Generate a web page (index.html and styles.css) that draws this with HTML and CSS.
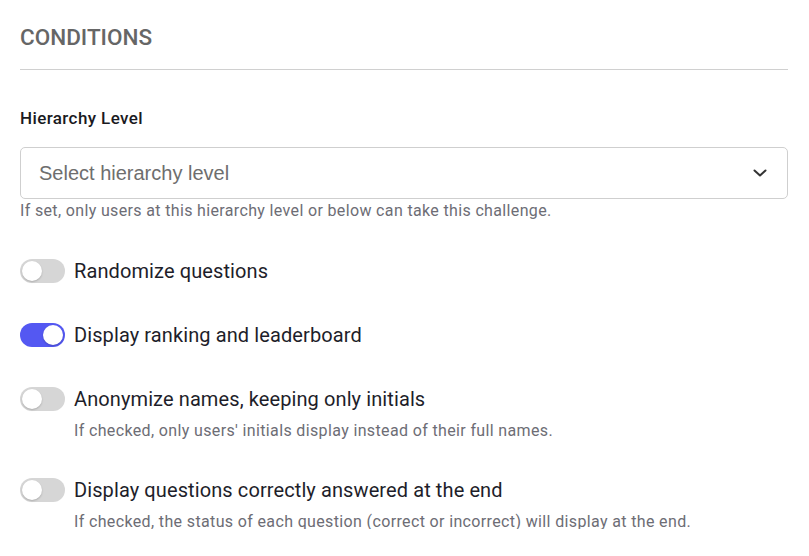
FILE: index.html
```html
<!DOCTYPE html>
<html>
<head>
<meta charset="utf-8">
<link rel="stylesheet" href="styles.css">
</head>
<body>
<div class="panel">
  <h2 class="title">CONDITIONS</h2>
  <div class="field">
    <label class="field-label">Hierarchy Level</label>
    <div class="select">
      <span class="placeholder">Select hierarchy level</span>
      <svg class="chevron" width="14" height="8" viewBox="0 0 14 8"><path d="M1.5 1.5 L7 6.5 L12.5 1.5" fill="none" stroke="#333" stroke-width="2" stroke-linecap="round" stroke-linejoin="round"/></svg>
    </div>
    <p class="hint">If set, only users at this hierarchy level or below can take this challenge.</p>
  </div>
  <div class="toggles">
    <div class="toggle-row">
      <span class="switch"><span class="knob"></span></span>
      <div class="toggle-text"><div class="toggle-label">Randomize questions</div></div>
    </div>
    <div class="toggle-row">
      <span class="switch on"><span class="knob"></span></span>
      <div class="toggle-text"><div class="toggle-label">Display ranking and leaderboard</div></div>
    </div>
    <div class="toggle-row">
      <span class="switch"><span class="knob"></span></span>
      <div class="toggle-text">
        <div class="toggle-label">Anonymize names, keeping only initials</div>
        <div class="toggle-hint">If checked, only users' initials display instead of their full names.</div>
      </div>
    </div>
    <div class="toggle-row">
      <span class="switch"><span class="knob"></span></span>
      <div class="toggle-text">
        <div class="toggle-label">Display questions correctly answered at the end</div>
        <div class="toggle-hint">If checked, the status of each question (correct or incorrect) will display at the end.</div>
      </div>
    </div>
  </div>
</div>
</body>
</html>
```
FILE: styles.css
```css
* { box-sizing: border-box; }
html, body { margin: 0; padding: 0; background: #fff; }
body { font-family: Roboto, "Noto Sans", sans-serif; color: #1e1e2a; }
.panel { padding: 22px 21px 0 20px; }
.title {
  margin: 0;
  font-size: 22.5px;
  font-weight: 500;
  color: #666666;
  line-height: 30px;
  padding-bottom: 17px;
  border-bottom: 1px solid #d0d0d0;
}
.field { margin-top: 37px; }
.field-label {
  display: block;
  font-size: 17px;
  letter-spacing: 0.4px;
  font-weight: 500;
  line-height: 22px;
  color: #1a1a22;
  margin-bottom: 18px;
}
.select {
  height: 52px;
  border: 1px solid #cfcfcf;
  border-radius: 5px;
  display: flex;
  align-items: center;
  justify-content: space-between;
  padding: 0 20px 0 18px;
}
.placeholder {
  font-family: "Liberation Sans", Arial, sans-serif;
  font-size: 20px;
  color: #6e6e6e;
}
.hint {
  margin: 1px 0 0;
  font-size: 16px;
  letter-spacing: 0.35px;
  line-height: 22px;
  color: #6d6d75;
}
.toggles {
  margin-top: 37px;
  display: flex;
  flex-direction: column;
  gap: 40px;
}
.toggle-row { display: flex; align-items: flex-start; gap: 9px; }
.switch {
  flex: none;
  width: 45px;
  height: 24px;
  border-radius: 12px;
  background: #d6d6d6;
  position: relative;
}
.switch .knob {
  position: absolute;
  top: 2px;
  left: 2px;
  width: 20px;
  height: 20px;
  border-radius: 50%;
  background: #fff;
  box-shadow: 0 1px 2px rgba(0,0,0,0.2);
}
.switch.on { background: #5458f2; }
.switch.on .knob { left: 23px; }
.toggle-label {
  font-size: 20px;
  letter-spacing: 0.1px;
  line-height: 24px;
  color: #1e1e2a;
}
.toggle-hint {
  margin-top: 13px;
  font-size: 16px;
  letter-spacing: 0.36px;
  line-height: 14px;
  color: #6d6d75;
}
```
